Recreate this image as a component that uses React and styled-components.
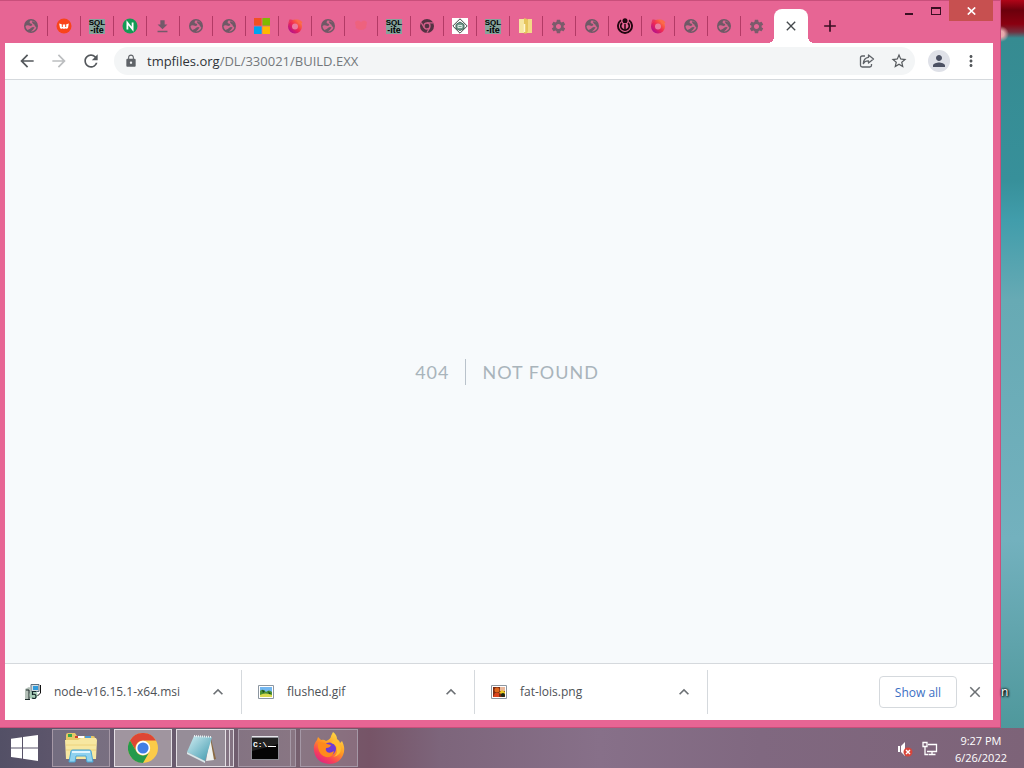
import React from "react"
import styled, { createGlobalStyle, css } from "styled-components"
import {
  MdAdd,
  MdArrowBack,
  MdArrowForward,
  MdClose,
  MdExpandLess,
  MdFileDownload,
  MdLock,
  MdMoreVert,
  MdPerson,
  MdRefresh,
  MdSettings,
  MdStarBorder,
} from "react-icons/md"

const colors = {
  frame: "#e76594",
  frameEdge: "#c94f7b",
  frameText: "#3a0f22",
  separator: "#b33a66",
  icon: "#5f6368",
  text: "#4d5156",
  line: "#d5d9dd",
  page: "#f7fafc",
  muted: "#a9b4bb",
  link: "#3b6fc4",
}

/* favicons */

const Globe = () => (
  <svg width="16" height="16" viewBox="0 0 16 16" aria-hidden="true">
    <circle cx="8" cy="8" r="7" fill="#6f5966" />
    <path d="M7.5 2.4Q5.6 4.4 7.6 5.4Q9.8 5.6 9.2 7.2Q7.6 8.4 6 7.6Q3.6 6.8 2.5 8.2Q2.6 10.4 4.4 12Q7 11.4 8.6 9.6Q10 8.6 11.6 9.6Q10.2 12 7.8 13.6Q11.6 13.6 13.4 9.8L11.6 7.6Q10.6 5.4 12.4 4.2Q10.4 2.2 7.5 2.4Z" fill="#d5668f" />
    <path d="M9.5 3Q12 3.6 13 6Q11 7.4 9.9 5.6Q8.4 4.6 9.5 3Z" fill="#6f5966" />
  </svg>
)
const Gear = () => <MdSettings size={17} color="#7b5b6b" />
const Download = () => <MdFileDownload size={17} color="#74596a" />

const Avast = () => (
  <svg width="16" height="16" viewBox="0 0 16 16" aria-hidden="true">
    <circle cx="8" cy="8" r="7.5" fill="#f9441a" />
    <path d="M3.2 5.5 Q8 7.5 12.8 5.5 L12 10 Q10.5 11.5 9.2 10.2 Q8 11.6 6.8 10.2 Q5 11.5 4 10Z" fill="#fff" />
    <path d="M6.3 6v3M9.7 6v3" stroke="#f9441a" />
  </svg>
)

const SqLite = () => (
  <svg width="18" height="18" viewBox="0 0 18 18" aria-hidden="true">
    <rect x="1" y="2" width="16" height="15" fill="#86a39c" />
    <text x="9" y="8" fontFamily="Liberation Sans, sans-serif" fontSize="8" fontWeight="700" textAnchor="middle">
      SQL
    </text>
    <text x="9" y="16" fontFamily="Liberation Sans, sans-serif" fontSize="9" fontWeight="700" textAnchor="middle">
      -ite
    </text>
  </svg>
)

const Node = () => (
  <svg width="16" height="16" viewBox="0 0 16 16" aria-hidden="true">
    <circle cx="8" cy="8" r="7.5" fill="#149a55" />
    <path d="M5.4 11.5V4.8L10.6 11.2V4.5" fill="none" stroke="#fff" strokeWidth="1.8" />
  </svg>
)

const Microsoft = () => (
  <svg width="16" height="16" viewBox="0 0 16 16" aria-hidden="true">
    <path d="M0 0h7.6v7.6H0z" fill="#f25022" />
    <path d="M8.4 0H16v7.6H8.4z" fill="#7fba00" />
    <path d="M0 8.4h7.6V16H0z" fill="#00a4ef" />
    <path d="M8.4 8.4H16V16H8.4z" fill="#ffb900" />
  </svg>
)

const FirefoxRing = () => (
  <svg width="16" height="16" viewBox="0 0 16 16" aria-hidden="true">
    <defs>
      <linearGradient id="ring" x1="0" y1="1" x2="1" y2="0">
        <stop offset="0" stopColor="#b5108a" />
        <stop offset="0.5" stopColor="#f02a53" />
        <stop offset="1" stopColor="#ff7a3c" />
      </linearGradient>
    </defs>
    <circle cx="8" cy="8.5" r="5" fill="#ec7ba0" stroke="url(#ring)" strokeWidth="4" />
    <path d="M6 2Q4 1 2.5 1.6L1 6Z" fill="#e8365f" />
    <path d="M9 1.5Q14 1 15.5 5L12 6Z" fill="#fb6a4c" />
  </svg>
)

const Faint = () => (
  <svg width="16" height="16" viewBox="0 0 16 16" aria-hidden="true">
    <path d="M2 4Q5 1 8 4Q11 1 14 4L13 10Q8 14 3 10Z" fill="#f4606f" opacity="0.6" />
  </svg>
)

const ChromeGrey = () => (
  <svg width="16" height="16" viewBox="0 0 16 16" aria-hidden="true">
    <circle cx="8" cy="8" r="7" fill="#543243" />
    <circle cx="8" cy="8" r="3" fill="#543243" stroke="#d25f8a" strokeWidth="1.3" />
    <path d="M8 4.8h6.2M5.2 9.6L2.2 4.6M10.8 9.6L7.8 14.8" stroke="#d25f8a" strokeWidth="1.2" />
  </svg>
)

const Diamond = () => (
  <svg width="16" height="16" viewBox="0 0 16 16" aria-hidden="true">
    <path d="M0 0h16v16H0z" fill="#fff" />
    <path d="M8 .8L15.2 8 8 15.2.8 8Z" fill="#fff" stroke="#444" />
    <path d="M4 6.5L8 4l4 2.5v4L8 12.5l-4-2z" fill="#71998b" stroke="#41665a" />
    <path d="M6 7.5h4v2H6z" fill="none" stroke="#dceae4" />
  </svg>
)

const Folder = () => (
  <svg width="14" height="16" viewBox="0 0 14 16" aria-hidden="true">
    <path d="M0 1h7v14H0z" fill="#f6e6a0" />
    <path d="M5 0l6 2v12l-4 1.5H5z" fill="#e6c55c" />
    <path d="M9 1h4v14H8l1-2z" fill="#f3da86" />
    <path d="M5.5 6v8" stroke="#fff6cf" strokeWidth="1.5" />
  </svg>
)

const Wikimedia = () => (
  <svg width="16" height="16" viewBox="0 0 16 16" fill="none" stroke="#220610" aria-hidden="true">
    <circle cx="8" cy="2.7" r="2.5" fill="#220610" stroke="none" />
    <path d="M4 2.3A7 7 0 1 0 12 2.3" strokeWidth="1.9" />
    <path d="M5 5A4.2 4.2 0 1 0 11 5" strokeWidth="1.8" />
    <path d="M8 6v6" strokeWidth="1.5" />
  </svg>
)

const tabs = [
  ["Untitled", Globe],
  ["Avast", Avast],
  ["SQLite", SqLite],
  ["Node.js", Node],
  ["Download", Download],
  ["Untitled", Globe],
  ["Untitled", Globe],
  ["Microsoft", Microsoft],
  ["Firefox", FirefoxRing],
  ["Untitled", Globe],
  ["Untitled", Faint],
  ["SQLite", SqLite],
  ["Chrome", ChromeGrey],
  ["Diamond", Diamond],
  ["SQLite", SqLite],
  ["Files", Folder],
  ["Settings", Gear],
  ["Untitled", Globe],
  ["Wikimedia", Wikimedia],
  ["Firefox", FirefoxRing],
  ["Untitled", Globe],
  ["Untitled", Globe],
  ["Settings", Gear],
]

/* download shelf icons */

const Installer = () => (
  <svg width="16" height="16" viewBox="0 0 16 16" aria-hidden="true">
    <path d="M6 .5h8v7H6z" fill="#d5dde2" stroke="#5c6f7e" />
    <path d="M8 2h5v4H8z" fill="#2f9bdc" />
    <path d="M0 5l4-2 2 1v10l-4 2-2-1z" fill="#b4c0b8" />
    <path d="M1 6h3v9M0 15.500h5" stroke="#1e2b2b" fill="none" />
    <circle cx="8.500" cy="11" r="4" fill="#a9cdb8" />
    <path d="M11 7.500H7.500v3q3.500-1 3.500 2t-4 1.500" stroke="#15262a" strokeWidth="1.200" fill="none" />
    <path d="M15.500 1v8l-3 3" stroke="#111" fill="none" />
  </svg>
)

const GifFile = () => (
  <svg width="16" height="14" viewBox="0 0 16 14" aria-hidden="true">
    <path d="M.5.5h15v13H.5z" fill="#fff" stroke="#8d96a0" />
    <path d="M2 2h12v10H2z" fill="#72b6f0" />
    <path d="M2 6q3-3 6 1 3-3 6 0v5H2z" fill="#4d9133" />
    <path d="M2 10q5-3 12 0v2H2z" fill="#d8d84e" />
    <path d="M4 5l3 1-2 2z" fill="#17451c" />
    <path d="M10 6l3 3h-2z" fill="#17451c" />
  </svg>
)

const PngFile = () => (
  <svg width="16" height="14" viewBox="0 0 16 14" aria-hidden="true">
    <path d="M.5.5h15v13H.5z" fill="#fff" stroke="#8d96a0" />
    <path d="M2 2h12v10H2z" fill="#7c2c12" />
    <circle cx="6" cy="5" r="2.5" fill="#e0661e" />
    <path d="M9 2h5v4H9z" fill="#e9b79a" />
    <path d="M8 8l3-3 3 2v3z" fill="#e9c922" />
    <path d="M4 8h4v4H2z" fill="#d9431d" />
    <circle cx="12" cy="10" r="2" fill="#1d2a19" />
  </svg>
)

const downloads = [
  { name: "node-v16.15.1-x64.msi", Icon: Installer },
  { name: "flushed.gif", Icon: GifFile },
  { name: "fat-lois.png", Icon: PngFile },
]

/* taskbar icons */

const WindowsLogo = () => (
  <svg width="27" height="26" viewBox="0 0 27 26" fill="#fff" aria-hidden="true">
    <path d="M0 3.800L11 2.200V12.400H0zM12 2L27 0V12.400H12zM0 13.400H11V23.600L0 22zM12 13.400H27V26L12 23.800z" />
  </svg>
)

const Explorer = () => (
  <svg width="34" height="32" viewBox="0 0 34 32" aria-hidden="true">
    <path d="M2 3q0-2 2-2h7l2 3h16q2 0 2 2v21H2z" fill="#e7c766" />
    <path d="M4 2h4v3H4z" fill="#38a849" />
    <path d="M12 4h8v2h-8z" fill="#fff" />
    <path d="M11 4h3v2h-3z" fill="#d5402d" />
    <path d="M21 4h6v3h-6z" fill="#4c9bd6" />
    <path d="M1 8h13l3-2h15l1 2-1 19H2z" fill="#f7e7a1" />
    <path d="M2 13h30M2 18h30" stroke="#ecd27c" />
    <path d="M5 30l2-11q0-1 2-1h16q2 0 2 1l2 11h-6l-1-6h-10l-1 6z" fill="#8fd2ef" stroke="#4ba6d4" />
    <path d="M8 20h18" stroke="#dff5ff" strokeWidth="2" />
  </svg>
)

const Chrome = () => (
  <svg width="30" height="30" viewBox="0 0 30 30" aria-hidden="true">
    <circle cx="15" cy="15" r="15" fill="#fbcb48" />
    <path d="M2 7.5A15 15 0 0 1 28 7.5H15A7.5 7.5 0 0 0 8.5 18.8Z" fill="#de4634" />
    <path d="M2 7.5L8.5 18.8A7.5 7.5 0 0 0 21.5 18.8L15 30A15 15 0 0 1 2 7.5Z" fill="#249a4c" />
    <circle cx="15" cy="15" r="7.2" fill="#fff" />
    <circle cx="15" cy="15" r="5.6" fill="#427ee4" />
  </svg>
)

const Notepad = () => (
  <svg width="30" height="30" viewBox="0 0 30 30" aria-hidden="true">
    <defs>
      <linearGradient id="pad" x1="0" y1="0" x2="1" y2="1">
        <stop offset="0" stopColor="#d2eef3" />
        <stop offset="1" stopColor="#3d98ad" />
      </linearGradient>
    </defs>
    <path d="M25 6l5 20-5 1z" fill="#8a6a43" />
    <path d="M24 4l4 23-8 1z" fill="#f0f2ee" />
    <path d="M8 3l18 1-7 24L1 19z" fill="url(#pad)" />
    <path d="M8 3l18 1" stroke="#e9edf0" strokeWidth="2" strokeDasharray="1 1" />
    <path d="M1 19l18 9v2L1 21z" fill="#d9e8ea" />
  </svg>
)

const Terminal = () => (
  <svg width="28" height="24" viewBox="0 0 28 24" aria-hidden="true">
    <path d="M0 0h28v24H0z" fill="#8d8d94" />
    <path d="M1 2h26v21H1z" fill="#050505" />
    <path d="M1 .5h26" stroke="#e8e8ec" />
    <path d="M1 15Q14 12 27 8V2H1z" fill="#222" />
    <text x="2" y="11" fill="#fff" fontFamily="Liberation Mono, monospace" fontSize="8" fontWeight="700">
      C:\
    </text>
    <path d="M17 10.5h8" stroke="#fff" />
  </svg>
)

const Firefox = () => (
  <svg width="32" height="32" viewBox="0 0 32 32" aria-hidden="true">
    <defs>
      <linearGradient id="fox" x1="0.8" y1="0" x2="0.2" y2="1">
        <stop offset="0" stopColor="#ffe14a" />
        <stop offset="0.45" stopColor="#ff9822" />
        <stop offset="0.75" stopColor="#f8405a" />
        <stop offset="1" stopColor="#d9208b" />
      </linearGradient>
    </defs>
    <path
      d="M20 0Q24 3 24 7Q27 9 27 11L29 9Q32 15 31 20Q28 32 16 32Q3 31 1 19Q0 12 4 8L5 5L8 8Q11 7 13 9Q18 7 18 4Z"
      fill="url(#fox)"
    />
    <circle cx="16.5" cy="17" r="6.5" fill="#6f3bd4" />
    <path d="M5 11Q9 9 14 12L18 13Q17 16 13 16Q12 18 14 20Q17 22 21 19Q20 26 13 25Q6 23 5 15Z" fill="#ff8a1c" />
    <path d="M18 11Q25 12 24 20Q23 24 20 25Q28 24 28 16Q26 9 21 8Z" fill="#ffbd2e" />
  </svg>
)

const taskButtons = [
  { label: "File Explorer", Icon: Explorer },
  { label: "Google Chrome", Icon: Chrome, active: true },
  { label: "Notepad", Icon: Notepad, bright: true, stack: 2 },
  { label: "Command Prompt", Icon: Terminal, stack: 1 },
  { label: "Firefox", Icon: Firefox },
]

const ShareIcon = () => (
  <svg width="16" height="16" viewBox="0 0 16 16" fill="none" stroke={colors.icon} strokeWidth="1.3" aria-hidden="true">
    <path d="M6 3H3.2Q1.5 3 1.5 4.700v7.600Q1.500 14 3.200 14h7.600q1.700 0 1.700-1.700V11" />
    <path d="M9.500 2l5 4-5 4V7.800Q6 7.600 4.300 10.600 4.600 5 9.500 4.300z" strokeLinejoin="round" />
  </svg>
)

const Muted = () => (
  <svg width="16" height="16" viewBox="0 0 16 16" aria-hidden="true">
    <path d="M1 5h2v6H1z" fill="#fff" />
    <path d="M4 5l4-4v14l-4-4z" fill="#fff" />
    <circle cx="11" cy="11" r="4.5" fill="#d8453b" />
    <path d="M9 9l4 4M13 9l-4 4" stroke="#fff" strokeWidth="1.4" />
  </svg>
)

const Network = () => (
  <svg width="16" height="16" viewBox="0 0 16 16" fill="none" stroke="#fff" strokeWidth="1.3" aria-hidden="true">
    <path d="M6 3.5h8.500v7H5M10 10.500v3M6.500 13.500h7" />
    <path d="M1 1.500h4v4H1zM3 5.500v8h3" />
  </svg>
)

const App = () => {
  return (
    <Desktop>
      <GlobalStyle />
      <Workspace>
        <BrowserWindow>
          <TitleBar>
            <TabStrip>
              {tabs.map(([title, Icon], i) => (
                <Tab key={i} aria-label={title} $last={i === tabs.length - 1}>
                  <Icon />
                </Tab>
              ))}
              <ActiveTab aria-label="Close tab">
                <MdClose size={16} />
              </ActiveTab>
              <NewTab aria-label="New tab">
                <MdAdd size={20} />
              </NewTab>
            </TabStrip>
            <WindowControls>
              <ControlButton aria-label="Minimize">
                <MinimizeMark />
              </ControlButton>
              <ControlButton aria-label="Maximize">
                <MaximizeMark />
              </ControlButton>
              <CloseWindow aria-label="Close">
                <svg width="9" height="8" viewBox="0 0 9 8" stroke="#fff" strokeWidth="1.7">
                  <path d="M.8.5l7.4 7M8.2.5l-7.4 7" />
                </svg>
              </CloseWindow>
            </WindowControls>
          </TitleBar>
          <Toolbar>
            <ToolButton aria-label="Back">
              <MdArrowBack size={20} />
            </ToolButton>
            <ToolButton aria-label="Forward" disabled>
              <MdArrowForward size={20} />
            </ToolButton>
            <ToolButton aria-label="Reload">
              <MdRefresh size={20} />
            </ToolButton>
            <Omnibox>
              <MdLock size={14} color={colors.icon} />
              <Address href="#address">
                tmpfiles.org<span>/DL/330021/BUILD.EXX</span>
              </Address>
              <ToolButton aria-label="Share">
                <ShareIcon />
              </ToolButton>
              <ToolButton aria-label="Bookmark">
                <MdStarBorder size={18} />
              </ToolButton>
            </Omnibox>
            <ToolButton aria-label="Profile">
              <Avatar>
                <MdPerson size={18} />
              </Avatar>
            </ToolButton>
            <ToolButton aria-label="Menu">
              <MdMoreVert size={18} />
            </ToolButton>
          </Toolbar>
          <Page>
            <Code>404</Code>
            <Message>Not Found</Message>
          </Page>
          <Shelf>
            {downloads.map(({ name, Icon }) => (
              <DownloadItem key={name}>
                <Icon />
                <FileName href="#file">{name}</FileName>
                <ShelfIcon aria-label={`Options for ${name}`}>
                  <MdExpandLess size={20} />
                </ShelfIcon>
              </DownloadItem>
            ))}
            <ShelfActions>
              <ShowAll>Show all</ShowAll>
              <ShelfIcon aria-label="Close downloads">
                <MdClose size={18} />
              </ShelfIcon>
            </ShelfActions>
          </Shelf>
        </BrowserWindow>
        <Wallpaper>
          <IconLabel>n</IconLabel>
        </Wallpaper>
      </Workspace>
      <Taskbar>
        <StartButton aria-label="Start">
          <WindowsLogo />
        </StartButton>
        {taskButtons.map(({ label, Icon, active, bright, stack = 0 }) => (
          <TaskGroup key={label}>
            <TaskButton aria-label={label} $active={active} $bright={bright}>
              <Icon />
            </TaskButton>
            {Array.from({ length: stack }, (_, i) => (
              <StackEdge key={i} $bright={bright} $wide={stack === 1} />
            ))}
          </TaskGroup>
        ))}
        <Tray>
          <Muted />
          <Network />
          <Clock>
            <span>9:27 PM</span>
            <span>6/26/2022</span>
          </Clock>
        </Tray>
      </Taskbar>
    </Desktop>
  )
}

export default App

const GlobalStyle = createGlobalStyle`
  * {
    box-sizing: border-box;
  }
  body {
    margin: 0;
    font-family: "Open Sans", "Noto Sans", sans-serif;
    font-size: 12px;
    color: ${colors.text};
  }
  button {
    margin: 0;
    padding: 0;
    border: 0;
    background: none;
    font: inherit;
    color: inherit;
  }
  svg {
    display: block;
    flex: none;
  }
`

const centered = css`
  display: flex;
  align-items: center;
  justify-content: center;
`

const Desktop = styled.div`
  display: flex;
  flex-direction: column;
  height: 100vh;
  overflow: hidden;
`

const Workspace = styled.div`
  display: flex;
  flex: 1;
  min-height: 0;
`

const BrowserWindow = styled.main`
  display: flex;
  flex-direction: column;
  flex: 1;
  min-width: 0;
  padding: 0 8px 8px 5px;
  background: ${colors.frame};
  box-shadow: inset 0 1px ${colors.frameEdge}, inset -1px -1px ${colors.frameEdge};
`

const TitleBar = styled.header`
  display: flex;
  justify-content: space-between;
  height: 43px;
`

const TabStrip = styled.nav`
  display: flex;
  align-items: flex-end;
  padding-left: 10px;
`

const Tab = styled.button`
  ${centered};
  width: 33px;
  height: 34px;
  padding-right: 2px;
  color: ${colors.frameText};
  background: linear-gradient(${colors.separator}, ${colors.separator}) right center / 1px 20px no-repeat;
  ${({ $last }) => $last && "background: none;"}
`

const ActiveTab = styled.button`
  ${centered};
  position: relative;
  width: 34px;
  height: 34px;
  border-radius: 8px 8px 0 0;
  background: #fff;
  color: #45494d;

  &::before,
  &::after {
    content: "";
    position: absolute;
    bottom: 0;
    width: 6px;
    height: 6px;
  }
  &::before {
    right: 100%;
    background: radial-gradient(circle at 0 0, transparent 6px, #fff 6px);
  }
  &::after {
    left: 100%;
    background: radial-gradient(circle at 100% 0, transparent 6px, #fff 6px);
  }
`

const NewTab = styled.button`
  ${centered};
  width: 44px;
  height: 34px;
  color: ${colors.frameText};
`

const WindowControls = styled.div`
  display: flex;
  height: 21px;
`

const ControlButton = styled.button`
  display: flex;
  align-items: flex-end;
  justify-content: center;
  width: 27px;
  padding-bottom: 6px;
`

const MinimizeMark = styled.span`
  width: 8px;
  height: 2px;
  background: ${colors.frameText};
`

const MaximizeMark = styled.span`
  width: 10px;
  height: 8px;
  border: 1px solid ${colors.frameText};
  border-top-width: 2px;
`

const CloseWindow = styled.button`
  ${centered};
  width: 44px;
  background: #c75050;
`

const Toolbar = styled.div`
  display: flex;
  align-items: center;
  height: 37px;
  padding: 0 6px;
  border-bottom: 1px solid ${colors.line};
  background: #fff;
`

const ToolButton = styled.button`
  ${centered};
  width: 32px;
  height: 28px;
  color: #54585c;

  &:disabled {
    color: #bcbec0;
  }
`

const Omnibox = styled.div`
  display: flex;
  align-items: center;
  flex: 1;
  height: 28px;
  margin: 0 8px 0 7px;
  padding-left: 10px;
  border-radius: 14px;
  background: #f3f5f6;
`

const Address = styled.a`
  flex: 1;
  padding-left: 9px;
  color: #303438;
  font-size: 13px;
  line-height: 20px;
  text-decoration: none;

  span {
    color: #74787c;
  }
`

const Avatar = styled.span`
  ${centered};
  width: 22px;
  height: 22px;
  border-radius: 50%;
  background: #dfe1e8;
  color: #4c5163;
`

const Page = styled.section`
  ${centered};
  flex: 1;
  background: ${colors.page};
  color: ${colors.muted};
  font-family: Lato, "Open Sans", sans-serif;
  font-size: 18px;
  line-height: 26px;
  letter-spacing: 1px;
  text-transform: uppercase;
`

const Code = styled.span`
  padding: 0 16px;
  border-right: 1px solid #b9c2cb;
`

const Message = styled.span`
  padding-left: 16px;
`

const Shelf = styled.footer`
  display: flex;
  align-items: center;
  height: 57px;
  padding-left: 4px;
  border-top: 1px solid ${colors.line};
  background: #fff;
`

const DownloadItem = styled.div`
  display: flex;
  align-items: center;
  width: 233px;
  height: 44px;
  padding: 0 11px 0 16px;
  border-right: 1px solid ${colors.line};
`

const FileName = styled.a`
  flex: 1;
  padding-left: 13px;
  color: ${colors.text};
  line-height: 20px;
  text-decoration: none;
`

const ShelfIcon = styled.button`
  ${centered};
  width: 24px;
  height: 24px;
  color: #6c7074;
`

const ShelfActions = styled.div`
  display: flex;
  align-items: center;
  gap: 6px;
  margin-left: auto;
  padding-right: 6px;
`

const ShowAll = styled.button`
  width: 78px;
  height: 32px;
  border: 1px solid ${colors.line};
  border-radius: 4px;
  color: ${colors.link};
  font-weight: 500;
`

const Wallpaper = styled.aside`
  display: flex;
  flex-direction: column;
  justify-content: flex-end;
  width: 23px;
  padding-bottom: 26px;
  background: radial-gradient(circle at 0 34px, #e8a9ac 3px, transparent 8px),
    linear-gradient(
      #b00518 0,
      #6b000c 10px,
      #8a0010 24px,
      #74303f 32px,
      #368b91 38px,
      #37909a 180px,
      #419dab 220px,
      #67aab4 300px,
      #73b1be 540px,
      #4f989c 100%
    );
`

const IconLabel = styled.span`
  width: 6px;
  color: #fff;
  line-height: 20px;
  text-shadow: 0 0 2px #000, 1px 1px 2px #000, 0 0 3px #000;
`

const Taskbar = styled.footer`
  display: flex;
  align-items: center;
  gap: 4px;
  height: 40px;
  background: linear-gradient(
    90deg,
    #535066 0,
    #5e566c 60px,
    #76606f 300px,
    #765467 370px,
    #7d657b 440px,
    #877089 600px,
    #806880 760px,
    #7d6378 100%
  );
`

const StartButton = styled.button`
  ${centered};
  width: 48px;
  height: 38px;
`

const TaskGroup = styled.div`
  display: flex;
  width: 58px;
  height: 38px;
`

const TaskButton = styled.button`
  ${centered};
  flex: 1;
  border: 1px solid ${({ $active, $bright }) => ($active || $bright ? "#e4dfe4" : "#a598a6")};
  background: ${({ $active, $bright }) =>
    $active ? "#a0959f" : $bright ? "#968d98" : "rgba(255, 255, 255, 0.14)"};
`

const StackEdge = styled.span`
  width: ${({ $wide }) => ($wide ? 5 : 4)}px;
  border: 1px solid ${({ $bright }) => ($bright ? "#d9d3da" : "#a598a6")};
  border-left: 0;
  background: rgba(255, 255, 255, 0.14);
`

const Tray = styled.div`
  display: flex;
  align-items: center;
  gap: 9px;
  margin-left: auto;
  padding: 2px 17px 0 0;
  color: #fff;
`

const Clock = styled.time`
  display: flex;
  flex-direction: column;
  align-items: center;
  padding-left: 8px;
  font-size: 11px;
  line-height: 17px;
`
